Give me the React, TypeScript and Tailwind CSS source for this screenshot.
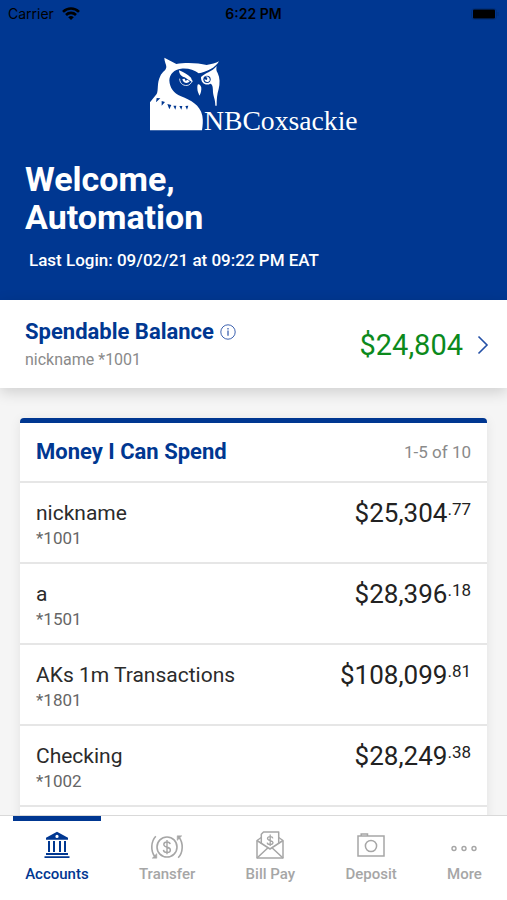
import React from 'react';

type Account = {
  name: string;
  number: string;
  dollars: string;
  cents: string;
};

type Tab = {
  key: string;
  label: string;
  icon: React.ReactNode;
};

const accounts: Account[] = [
  { name: 'nickname', number: '*1001', dollars: '$25,304', cents: '.77' },
  { name: 'a', number: '*1501', dollars: '$28,396', cents: '.18' },
  { name: 'AKs 1m Transactions', number: '*1801', dollars: '$108,099', cents: '.81' },
  { name: 'Checking', number: '*1002', dollars: '$28,249', cents: '.38' },
];

const BankIcon = () => (
  <svg width="26" height="28" viewBox="0 0 26 28" fill="currentColor" aria-hidden="true">
    <path fillRule="evenodd" d="M13 0.8 24 6.8V8.8H2V6.8ZM13 3.8a1.6 1.6 0 1 0 0 3.2 1.6 1.6 0 0 0 0-3.2Z" />
    <path d="M4 10h2v11H4zM9 10h2v11H9zM15 10h2v11h-2zM20 10h2v11h-2z" />
    <path d="M2 22h22v2H2zM0.5 25.2h25V27H0.5z" />
  </svg>
);

const TransferIcon = () => (
  <svg width="34" height="28" viewBox="0 0 34 28" fill="none" stroke="currentColor" strokeWidth="1.6" aria-hidden="true">
    <circle cx="17" cy="16" r="10" />
    <path d="M20.2 13.2c-.3-1.5-1.5-2.2-3.2-2.2s-3.2.9-3.2 2.5c0 3.6 6.600 2 6.600 5.400 0 1.600-1.400 2.600-3.400 2.600s-3.400-.9-3.600-2.600M17 9v14.300" strokeWidth="1.4" />
    <path d="M5.800 5.200C.8 10.500.5 20 4.800 25.600" />
    <path d="M2.200 27.200h4.600v-4.600Z" fill="currentColor" strokeWidth="0.5" />
    <path d="M28.200 26.800C33.200 21.500 33.500 12 29.200 6.400" />
    <path d="M31.800 4.800h-4.600v4.600Z" fill="currentColor" strokeWidth="0.5" />
  </svg>
);

const BillIcon = () => (
  <svg width="28" height="28" viewBox="0 0 28 28" fill="none" stroke="currentColor" strokeWidth="1.5" strokeLinejoin="round" aria-hidden="true">
    <path d="M5.3 6.5 1 9.500V27h26V9.500L22.700 6.500" />
    <path d="M5.3 12.5V3.2L7.5 1h15.2v11.5" />
    <path d="M1 9.5 14 18 27 9.5M1 27l11-10.3M27 27 16 16.7" />
    <path d="M16.9 7.3c-.3-1.2-1.3-1.7-2.7-1.7s-2.7.7-2.7 1.9c0 2.7 5.5 1.5 5.5 4.1 0 1.2-1.2 1.9-2.8 1.9s-2.9-.6-3-1.9M14.2 3.5v11.5" strokeWidth="1.3" />
  </svg>
);

const CameraIcon = () => (
  <svg width="28" height="28" viewBox="0 0 28 28" fill="none" stroke="currentColor" strokeWidth="1.5" aria-hidden="true">
    <path d="M1 5h26v20H1z" />
    <path d="M4.2 5V3h6.3v2" />
    <circle cx="14" cy="15" r="5.6" />
  </svg>
);

const MoreIcon = () => (
  <svg width="28" height="28" viewBox="0 0 28 28" fill="none" stroke="currentColor" strokeWidth="1.4" aria-hidden="true">
    <circle cx="4" cy="17.5" r="2" />
    <circle cx="14" cy="17.5" r="2" />
    <circle cx="24" cy="17.5" r="2" />
  </svg>
);

const tabs: Tab[] = [
  { key: 'accounts', label: 'Accounts', icon: <BankIcon /> },
  { key: 'transfer', label: 'Transfer', icon: <TransferIcon /> },
  { key: 'billpay', label: 'Bill Pay', icon: <BillIcon /> },
  { key: 'deposit', label: 'Deposit', icon: <CameraIcon /> },
  { key: 'more', label: 'More', icon: <MoreIcon /> },
];

const Logo = () => (
  <svg width="212" height="84" viewBox="446 165 636 252" fill="#fff" role="img" aria-label="NBCoxsackie">
    {/* body and head */}
    <path d="M452 388V304L472 279C478 268 472 246 483 225C488 213 500 209 501 198C501 190 495 182 495 170L531 189C560 184 598 186 622 192C636 190 650 186 659 181C654 190 645 199 634 204C622 210 608 216 598 217C584 206 566 201 545 203C525 206 511 218 510 238C511 260 522 276 545 286C575 298 602 312 609 344C612 360 610 374 608 388Z" />
    {/* right side of the face */}
    <path d="M605 228C616 216 638 213 652 195C650 204 651 210 655 216C662 230 662 248 658 264C653 280 652 296 652 314H648C648 296 642 286 641 274C641 260 640 250 633 248C620 256 604 246 605 228Z" />
    <circle cx="623" cy="235" r="11" fill="#003791" />
    <path d="M618 227C626 225 633 231 631 239C626 246 615 243 615 235L623 237L624 230Z" />
    {/* left brow and eye */}
    <path d="M539 208C550 212 565 221 575 230L580 244C571 238 563 235 556 229C547 228 539 219 539 208Z" />
    <path d="M541 233C541 249 555 257 568 252C575 248 578 243 578 238" fill="none" stroke="#fff" strokeWidth="2.5" />
    <path d="M549 234C551 246 564 250 571 241L564 236L559 240L556 233Z" />
    {/* beak */}
    <path d="M596 250C602 250 607 256 606 265C605 275 603 280 600 284C598 276 594 272 594 262C594 257 594 253 596 250Z" />
    {/* collar feathers */}
    <path d="M472 291L483 292L470 304ZM487 300L497 303L487 314ZM504 309L516 312L510 325ZM522 314L531 314L528 326ZM540 315L549 315L546 326ZM558 315L567 314L563 326Z" fill="#003791" />
    <text x="614" y="386" fontSize="83" fontFamily="'Liberation Serif', serif">NBCoxsackie</text>
  </svg>
);

const StatusBar = () => (
  <div className="grid h-7 grid-cols-3 items-center px-2 font-['Inter',sans-serif] text-sm text-black">
    <div className="flex items-center gap-2">
      <span>Carrier</span>
      <svg width="18" height="14" viewBox="0 0 18 14" fill="none" stroke="currentColor" strokeWidth="2.6" aria-hidden="true">
        <path d="M1 4.8C5.5.3 12.5.3 17 4.8" />
        <path d="M4 8C6.8 5.2 11.2 5.2 14 8" />
        <path d="M9 13 6.2 10.2Q9 7.8 11.8 10.2Z" fill="currentColor" stroke="none" />
      </svg>
    </div>
    <span className="text-center font-semibold">6:22 PM</span>
    <svg className="justify-self-end" width="28" height="12" viewBox="0 0 28 12" aria-hidden="true">
      <rect x="0.5" y="0.5" width="25" height="11" rx="3" fill="none" stroke="#00307d" />
      <rect x="2" y="1.5" width="22" height="9" rx="1" fill="#000" />
      <path d="M27 4v4" stroke="#00307d" />
    </svg>
  </div>
);

const AccountRow = ({ account }: { account: Account }) => (
  <li className="flex items-start justify-between border-b-2 border-[#e6e6e6] px-4 pt-4 pb-3">
    <div>
      <p className="text-[21px] leading-7 text-[#2b2b2b]">{account.name}</p>
      <p className="text-[17px] leading-[23px] text-[#666]">{account.number}</p>
    </div>
    <p className="flex items-start text-[#222]">
      <span className="text-[26px] leading-7">{account.dollars}</span>
      <span className="text-[17px] leading-5">{account.cents}</span>
    </p>
  </li>
);

export default function App() {
  return (
    <div className="flex h-screen flex-col bg-[#f5f5f5] font-['Roboto',sans-serif]">
      <main className="min-h-0 flex-1 overflow-hidden">
        <header className="bg-[#003791] pb-7 text-white">
          <StatusBar />
          <div className="flex justify-center pt-7">
            <Logo />
          </div>
          <div className="px-[25px] pt-5">
            <h1 className="text-[34px] leading-[38px] font-bold">
              Welcome,
              <br />
              Automation
            </h1>
            <p className="mt-3 pl-1 text-[17px] leading-6 font-medium">Last Login: 09/02/21 at 09:22 PM EAT</p>
          </div>
        </header>

        <section className="relative flex items-center justify-between bg-white pt-[18px] pr-[18px] pb-4 pl-[25px] shadow-[0_4px_14px_rgba(0,0,0,0.16)]">
          <div>
            <div className="flex items-center gap-0.5">
              <h2 className="text-[22px] leading-7 font-bold text-[#003791]">Spendable Balance</h2>
              <button type="button" aria-label="About spendable balance" className="p-1 text-[#3d62b0]">
                <svg width="16" height="16" viewBox="0 0 16 16" fill="none" stroke="currentColor" aria-hidden="true">
                  <circle cx="8" cy="8" r="7.2" />
                  <path d="M8 6.5v5.2M8 4v1.4" strokeWidth="1.3" />
                </svg>
              </button>
            </div>
            <p className="mt-0.5 text-base leading-6 text-[#8a8a8a]">nickname *1001</p>
          </div>
          <button type="button" className="flex items-center gap-3.5 text-[29px] leading-9 text-[#0c8a1c]">
            $24,804
            <svg width="12" height="20" viewBox="0 0 12 20" fill="none" stroke="#2450a6" strokeWidth="1.6" aria-hidden="true">
              <path d="M1.5 1.5 10 10l-8.5 8.5" />
            </svg>
          </button>
        </section>

        <section className="mx-5 mt-[30px] rounded-t border-t-5 border-[#003791] bg-white shadow-[0_2px_12px_rgba(0,0,0,0.08)]">
          <div className="flex items-center justify-between border-b-2 border-[#e6e6e6] px-4 py-[15px]">
            <h2 className="text-[22px] leading-7 font-bold text-[#003791]">Money I Can Spend</h2>
            <span className="text-[17px] leading-6 text-[#8a8a8a]">1-5 of 10</span>
          </div>
          <ul>
            {accounts.map(account => (
              <AccountRow key={account.number} account={account} />
            ))}
          </ul>
          <div className="h-20" />
        </section>
      </main>

      <nav className="relative flex h-[85px] shrink-0 justify-around border-t border-[#d9d9d9] bg-white">
        {tabs.map((tab, index) => (
          <button
            key={tab.key}
            type="button"
            aria-current={index === 0 ? 'page' : undefined}
            className={`flex flex-col items-center border-t-5 px-3 pt-[10px] ${
              index === 0 ? 'border-[#003791] text-[#003791]' : 'border-transparent text-[#a6a6a6]'
            }`}
          >
            {tab.icon}
            <span className="mt-[5px] text-[15px] leading-5 font-medium">{tab.label}</span>
          </button>
        ))}
      </nav>
    </div>
  );
}
